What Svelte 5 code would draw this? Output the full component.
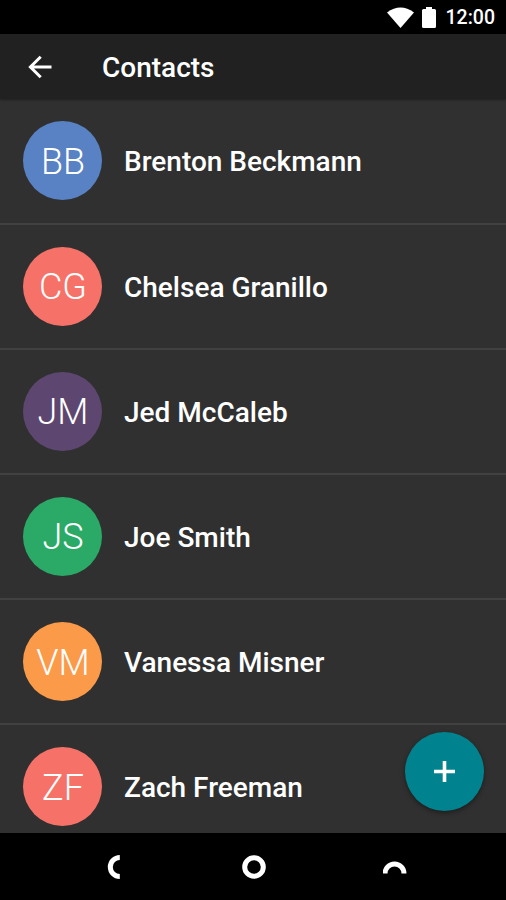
<script>
  const contacts = [
    { name: 'Brenton Beckmann', initials: 'BB', color: '#5882c3' },
    { name: 'Chelsea Granillo', initials: 'CG', color: '#f67268' },
    { name: 'Jed McCaleb', initials: 'JM', color: '#5d4770' },
    { name: 'Joe Smith', initials: 'JS', color: '#2aaa66' },
    { name: 'Vanessa Misner', initials: 'VM', color: '#fb9a48' },
    { name: 'Zach Freeman', initials: 'ZF', color: '#f67268' }
  ];
</script>

<div class="screen">
  <div class="status">
    <svg class="wifi" width="27" height="21" viewBox="0 0 27 21" aria-hidden="true">
      <path d="M0 5.4Q13.5 -4.6 27 5.4L13.5 21Z" fill="#fff" />
    </svg>
    <svg class="battery" width="14" height="21" viewBox="0 0 14 21" aria-hidden="true">
      <path d="M4 0h6v2h2.5q1.5 0 1.5 1.5v16q0 1.5-1.5 1.5h-11Q0 21 0 19.500v-16Q0 2 1.500 2H4z" fill="#fff" />
    </svg>
    <span class="time">12:00</span>
  </div>
  <header>
    <button class="back" aria-label="Back">
      <svg width="24" height="24" viewBox="0 0 24 24">
        <path d="M23.500 12H3M12.700 1.700L2.400 12l10.300 10.300" fill="none" stroke="#fff" stroke-width="3" />
      </svg>
    </button>
    <h1>Contacts</h1>
  </header>
  <main>
    <ul>
      {#each contacts as contact}
        <li>
          <span class="avatar" style:background={contact.color}>{contact.initials}</span>
          <span class="name">{contact.name}</span>
        </li>
      {/each}
    </ul>
    <button class="fab" aria-label="Add contact">
      <svg width="21" height="21" viewBox="0 0 21 21">
        <path d="M10.500 0v21M0 10.500h21" stroke="#fff" stroke-width="3.600" />
      </svg>
    </button>
  </main>
  <nav>
    <svg width="24" height="24" viewBox="0 0 24 24" aria-label="Back">
      <path d="M17.800 2.500a9.500 9.500 0 0 0 0 19" />
    </svg>
    <svg width="24" height="24" viewBox="0 0 24 24" aria-label="Home">
      <circle cx="12" cy="12" r="9.300" />
    </svg>
    <svg width="24" height="24" viewBox="0 0 24 24" aria-label="Recents">
      <path d="M2 18.500a9.500 9.500 0 0 1 19 0" />
    </svg>
  </nav>
</div>

<style>
  .screen {
    display: flex;
    flex-direction: column;
    width: 506px;
    height: 900px;
    overflow: hidden;
    background: #303030;
    color: #fff;
    font-family: Roboto, sans-serif;
  }
  .status {
    flex: none;
    display: flex;
    justify-content: flex-end;
    align-items: center;
    box-sizing: border-box;
    height: 34px;
    padding-right: 11px;
    background: #000;
  }
  .wifi {
    margin-right: 8px;
  }
  .battery {
    margin-right: 10px;
  }
  .time {
    font-size: 19.5px;
    line-height: 34px;
    font-weight: 500;
    padding-top: 2px;
  }
  header {
    flex: none;
    display: flex;
    align-items: center;
    height: 65px;
    padding-left: 28px;
    background: #212121;
    box-shadow: 0 1px 2px rgba(0, 0, 0, 0.35);
    z-index: 1;
  }
  button {
    padding: 0;
    border: 0;
    background: none;
    display: flex;
    align-items: center;
    justify-content: center;
  }
  h1 {
    margin: 2px 0 0 50px;
    font-size: 28px;
    line-height: 34px;
    font-weight: 500;
  }
  main {
    flex: none;
    position: relative;
    height: 734px;
    overflow: hidden;
  }
  ul {
    margin: 0;
    padding: 0.4px 0 0;
    list-style: none;
  }
  li {
    display: flex;
    align-items: center;
    box-sizing: border-box;
    height: 125.15px;
    padding-left: 23px;
    border-bottom: 2px solid #414141;
  }
  .avatar {
    flex: none;
    display: flex;
    align-items: center;
    justify-content: center;
    box-sizing: border-box;
    width: 79px;
    height: 79px;
    margin-right: 22px;
    padding: 2px 0 0 1px;
    border-radius: 50%;
    font-size: 36px;
    font-weight: 300;
  }
  .name {
    font-size: 28px;
    line-height: 34px;
    font-weight: 500;
    padding-top: 3px;
    white-space: nowrap;
  }
  .fab {
    position: absolute;
    right: 22px;
    bottom: 22.5px;
    width: 79px;
    height: 79px;
    border-radius: 50%;
    background: #00838f;
    box-shadow: 0 2px 5px rgba(0, 0, 0, 0.4);
  }
  nav {
    flex: 1;
    display: flex;
    justify-content: center;
    align-items: center;
    gap: 116.500px;
    padding-left: 2px;
    background: #000;
  }
  nav svg {
    fill: none;
    stroke: #fff;
    stroke-width: 5;
  }
</style>
